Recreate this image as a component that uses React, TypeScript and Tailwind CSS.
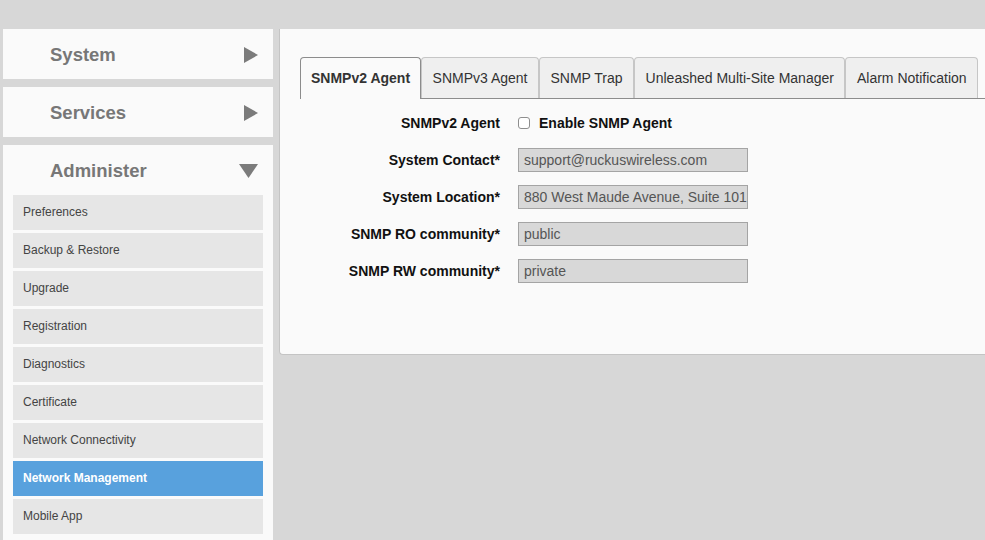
import React from 'react';

const font = { fontFamily: '"Liberation Sans", Arial, Helvetica, sans-serif' };

const adminItems = [
  'Preferences',
  'Backup & Restore',
  'Upgrade',
  'Registration',
  'Diagnostics',
  'Certificate',
  'Network Connectivity',
  'Network Management',
  'Mobile App',
];

const tabs = [
  'SNMPv2 Agent',
  'SNMPv3 Agent',
  'SNMP Trap',
  'Unleashed Multi-Site Manager',
  'Alarm Notification',
];

const fields = [
  { label: 'System Contact*', value: 'support@ruckuswireless.com' },
  { label: 'System Location*', value: '880 West Maude Avenue, Suite 101, Sunnyvale' },
  { label: 'SNMP RO community*', value: 'public' },
  { label: 'SNMP RW community*', value: 'private' },
];

const ArrowRight = () => (
  <svg width="14" height="16" viewBox="0 0 14 16">
    <polygon points="0,0 14,8 0,16" fill="#7b7b7b" />
  </svg>
);

const ArrowDown = () => (
  <svg width="19" height="14" viewBox="0 0 19 14">
    <polygon points="0,0 19,0 9.5,14" fill="#7b7b7b" />
  </svg>
);

const SectionHeader: React.FC<{ title: string; open?: boolean }> = ({ title, open }) => (
  <div className="h-[50px] flex items-center justify-between pl-[47px] pr-[15px] pt-[1px]">
    <span className="text-[18.5px] font-bold text-[#777777]">{title}</span>
    {open ? <ArrowDown /> : <ArrowRight />}
  </div>
);

export default function App() {
  const active = 'Network Management';

  return (
    <div style={font} className="w-[985px] h-[540px] overflow-hidden bg-[#d7d7d7] flex items-start gap-[6px] pt-[29px] pl-[3px]">
      {/* Sidebar */}
      <aside className="w-[270px] flex-shrink-0 flex flex-col gap-[8px]">
        <div className="bg-[#fafafa]">
          <SectionHeader title="System" />
        </div>
        <div className="bg-[#fafafa]">
          <SectionHeader title="Services" />
        </div>
        <div className="bg-[#fafafa] pb-[20px]">
          <SectionHeader title="Administer" open />
          <ul className="flex flex-col gap-[3px] px-[10px]">
            {adminItems.map((item) => (
              <li
                key={item}
                className={
                  item === active
                    ? 'h-[35px] flex items-center pl-[10px] pb-[1px] text-[12px] font-bold text-white bg-[#58a1dd]'
                    : 'h-[35px] flex items-center pl-[10px] pb-[1px] text-[12px] text-[#444444] bg-[#e6e6e6]'
                }
              >
                {item}
              </li>
            ))}
          </ul>
        </div>
      </aside>

      {/* Main panel */}
      <main className="flex-1 min-w-0 h-[326px] bg-[#fafafa] rounded-bl-[4px] border-l border-b border-[#c4c4c4] pt-[28px] pl-[20px]">
        <div className="flex items-end border-b border-[#8c8c8c]">
          {tabs.map((tab, i) =>
            i === 0 ? (
              <div
                key={tab}
                className="h-[42px] -mb-px px-[10px] flex items-center text-[14px] font-bold text-[#333333] bg-[#fafafa] border border-b-0 border-[#8c8c8c] rounded-t-[4px]"
              >
                {tab}
              </div>
            ) : (
              <div
                key={tab}
                className="h-[41px] px-[10.5px] flex items-center text-[14px] text-[#333333] bg-[#efefef] border border-b-0 border-[#c6c6c6] rounded-t-[4px]"
              >
                {tab}
              </div>
            )
          )}
        </div>

        <div className="flex flex-col gap-[13px] mt-[12px]">
          <div className="h-[24px] flex items-center">
            <div className="w-[200px] text-right text-[14px] font-bold text-[#111111]">SNMPv2 Agent</div>
            <div className="ml-[18px] flex items-center gap-[9px]">
              <span className="w-[12px] h-[12px] rounded-[3px] border border-[#8e8e8e] bg-white" />
              <span className="text-[14px] font-bold text-[#111111]">Enable SNMP Agent</span>
            </div>
          </div>
          {fields.map((f) => (
            <div key={f.label} className="h-[24px] flex items-center">
              <div className="w-[200px] text-right text-[14px] font-bold text-[#111111]">{f.label}</div>
              <input
                readOnly
                value={f.value}
                style={font}
                className="ml-[18px] w-[230px] h-[24px] bg-[#d8d8d8] border border-[#a4a4a4] pl-[5px] text-[14px] text-[#555555] outline-none"
              />
            </div>
          ))}
        </div>
      </main>
    </div>
  );
}
